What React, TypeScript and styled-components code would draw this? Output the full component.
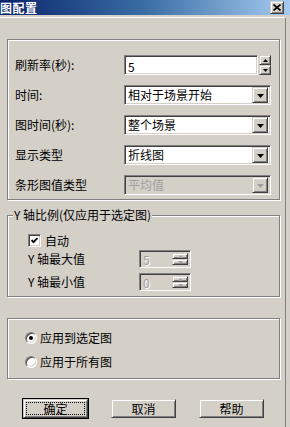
import React from "react";
import styled, { createGlobalStyle, css } from "styled-components";

const FACE = "#d4d0c8";
const SHADOW = "#808080";
const DARK = "#404040";
const HI = "#ffffff";

const GlobalStyle = createGlobalStyle`
  html, body { margin: 0; padding: 0; background: ${FACE}; }
  body {
    font-family: "Noto Sans CJK SC", "Noto Sans", sans-serif;
    font-size: 12px;
    line-height: 14px;
    color: #000;
  }
  * { box-sizing: border-box; }
`;

const sunken = css`
  border: 1px solid;
  border-color: ${SHADOW} ${HI} ${HI} ${SHADOW};
  box-shadow: inset 1px 1px 0 ${DARK}, inset -1px -1px 0 ${FACE};
`;

const raised = css`
  border: 1px solid;
  border-color: ${FACE} ${DARK} ${DARK} ${FACE};
  box-shadow: inset 1px 1px 0 ${HI}, inset -1px -1px 0 ${SHADOW};
  background: ${FACE};
`;

const Window = styled.div`
  width: 290px;
  height: 427px;
  display: flex;
  flex-direction: column;
  background: ${FACE};
  overflow: hidden;
`;

const TitleBar = styled.div`
  flex: none;
  height: 15px;
  display: flex;
  align-items: flex-start;
  justify-content: space-between;
  padding-right: 6px;
  background: linear-gradient(90deg, #0a246a 0%, #3a6ea5 50%, #a6caf0 100%);
`;

const Title = styled.span`
  color: #fff;
  font-weight: bold;
  font-size: 12px;
  line-height: 15px;
  letter-spacing: 0.5px;
`;

const CloseButton = styled.div`
  ${raised};
  width: 14px;
  height: 13px;
  margin-top: 1px;
  display: flex;
  align-items: center;
  justify-content: center;
`;

const Client = styled.div`
  flex: 1;
  margin-top: 2px;
  margin-right: 4px;
  border-top: 1px solid ${HI};
  border-right: 1px solid ${SHADOW};
  display: flex;
  flex-direction: column;
  padding: 21px 0 0 7px;
`;

const GroupBox = styled.div<{ $h: number; $mt: number }>`
  position: relative;
  width: 273px;
  height: ${(p) => p.$h}px;
  margin-top: ${(p) => p.$mt}px;
  border: 1px solid ${SHADOW};
  box-shadow: inset 1px 1px 0 ${HI}, 1px 1px 0 ${HI};
`;

const Legend = styled.span`
  position: absolute;
  top: -8px;
  left: 5px;
  padding: 0 1px;
  background: ${FACE};
  line-height: 14px;
`;

const FormGrid = styled.div`
  display: grid;
  grid-template-columns: 109px 147px;
  grid-auto-rows: 20px;
  row-gap: 10px;
  align-items: center;
  padding: 15px 0 0 7px;
`;

const Label = styled.span`
  white-space: nowrap;
  color: #000;
`;

const SpinWrap = styled.div`
  display: flex;
  gap: 1px;
  height: 20px;
`;

const TextBox = styled.div`
  ${sunken};
  flex: 1;
  height: 100%;
  background: #fff;
  color: #000;
  padding: 2px 0 0 3px;
  line-height: 15px;
  display: flex;
  align-items: center;
  min-width: 0;
`;

const SpinButtons = styled.div<{ $w: number }>`
  display: flex;
  flex-direction: column;
  width: ${(p) => p.$w}px;
  flex: none;
`;

const SmallButton = styled.div`
  ${raised};
  flex: 1;
  display: flex;
  align-items: center;
  justify-content: center;
`;

const Select = styled.div<{ $disabled?: boolean }>`
  ${sunken};
  height: 20px;
  background: ${(p) => (p.$disabled ? FACE : "#fff")};
  color: ${(p) => (p.$disabled ? "#a0a0a0" : "#000")};
  display: flex;
  align-items: center;
  padding: 2px 2px 2px 3px;
`;

const SelectText = styled.span`
  flex: 1;
  white-space: nowrap;
  line-height: 16px;
`;

const DropButton = styled.div`
  ${raised};
  width: 16px;
  height: 16px;
  flex: none;
  display: flex;
  align-items: center;
  justify-content: center;
  padding-top: 1px;
`;

const AxisBody = styled.div`
  display: flex;
  flex-direction: column;
  padding: 18px 0 0 20px;
`;

const CheckRow = styled.label`
  display: flex;
  align-items: center;
  gap: 4px;
  height: 13px;
`;

const CheckBox = styled.span`
  ${sunken};
  width: 13px;
  height: 13px;
  background: #fff;
  display: flex;
  align-items: center;
  justify-content: center;
`;

const AxisRow = styled.div<{ $mt: number }>`
  display: grid;
  grid-template-columns: 111px 52px;
  align-items: center;
  height: 18px;
  margin-top: ${(p) => p.$mt}px;
`;

const MiniSpin = styled.div`
  ${sunken};
  height: 18px;
  background: ${FACE};
  display: flex;
  padding: 2px;
`;

const MiniValue = styled.span`
  flex: 1;
  color: #a0a0a0;
  text-shadow: 1px 1px 0 #fff;
  line-height: 14px;
  padding-left: 1px;
`;

const RadioBody = styled.div`
  display: flex;
  flex-direction: column;
  gap: 10px;
  padding: 12px 0 0 17px;
`;

const RadioRow = styled.label`
  display: flex;
  align-items: center;
  gap: 3px;
  height: 14px;
`;

const RadioCircle = styled.span<{ $checked?: boolean }>`
  width: 12px;
  height: 12px;
  border-radius: 50%;
  border: 1px solid;
  border-color: ${SHADOW} ${HI} ${HI} ${SHADOW};
  box-shadow: inset 1px 1px 0 ${DARK}, inset -1px -1px 0 ${FACE};
  background: #fff;
  display: flex;
  align-items: center;
  justify-content: center;
  &::after {
    content: "";
    width: 4px;
    height: 4px;
    border-radius: 50%;
    background: ${(p) => (p.$checked ? "#000" : "transparent")};
  }
`;

const ButtonRow = styled.div`
  display: flex;
  gap: 21px;
  margin-top: 19px;
  padding-left: 15px;
`;

const PushButton = styled.div<{ $default?: boolean }>`
  width: 67px;
  height: 21px;
  display: flex;
  background: ${FACE};
  border: 1px solid ${(p) => (p.$default ? "#000" : "transparent")};
`;

const ButtonFace = styled.div`
  ${raised};
  flex: 1;
  display: flex;
  align-items: center;
  justify-content: center;
  padding: 2px;
`;

const FocusRing = styled.span<{ $show?: boolean }>`
  flex: 1;
  align-self: stretch;
  display: flex;
  align-items: center;
  justify-content: center;
  border: 1px dotted ${(p) => (p.$show ? "#000" : "transparent")};
  line-height: 14px;
`;

const Arrow = ({ dir, w, h, color }: { dir: "up" | "down"; w: number; h: number; color: string }) => (
  <svg width={w} height={h} viewBox={`0 0 ${w} ${h}`}>
    {dir === "down" ? (
      <polygon points={`0,0 ${w},0 ${w / 2},${h}`} fill={color} />
    ) : (
      <polygon points={`0,${h} ${w},${h} ${w / 2},0`} fill={color} />
    )}
  </svg>
);

const DropDown = ({ text, disabled }: { text: string; disabled?: boolean }) => (
  <Select $disabled={disabled}>
    <SelectText>{text}</SelectText>
    <DropButton>
      <Arrow dir="down" w={7} h={4} color={disabled ? "#a0a0a0" : "#000"} />
    </DropButton>
  </Select>
);

const AxisSpin = ({ value }: { value: string }) => (
  <MiniSpin>
    <MiniValue>{value}</MiniValue>
    <SpinButtons $w={16}>
      <SmallButton>
        <Arrow dir="up" w={5} h={3} color="#a0a0a0" />
      </SmallButton>
      <SmallButton>
        <Arrow dir="down" w={5} h={3} color="#a0a0a0" />
      </SmallButton>
    </SpinButtons>
  </MiniSpin>
);

export default function App() {
  return (
    <>
      <GlobalStyle />
      <Window>
        <TitleBar>
          <Title>图配置</Title>
          <CloseButton>
            <svg width="8" height="7" viewBox="0 0 8 7">
              <path d="M0.5 0.5 L7.5 6.5 M7.5 0.5 L0.5 6.5" stroke="#000" strokeWidth="1.6" />
            </svg>
          </CloseButton>
        </TitleBar>
        <Client>
          <GroupBox $h={161} $mt={0}>
            <FormGrid>
              <Label>刷新率(秒):</Label>
              <SpinWrap>
                <TextBox>5</TextBox>
                <SpinButtons $w={12}>
                  <SmallButton>
                    <Arrow dir="up" w={5} h={3} color="#000" />
                  </SmallButton>
                  <SmallButton>
                    <Arrow dir="down" w={5} h={3} color="#000" />
                  </SmallButton>
                </SpinButtons>
              </SpinWrap>
              <Label>时间:</Label>
              <DropDown text="相对于场景开始" />
              <Label>图时间(秒):</Label>
              <DropDown text="整个场景" />
              <Label>显示类型</Label>
              <DropDown text="折线图" />
              <Label>条形图值类型</Label>
              <DropDown text="平均值" disabled />
            </FormGrid>
          </GroupBox>

          <GroupBox $h={82} $mt={15}>
            <Legend>Y 轴比例(仅应用于选定图)</Legend>
            <AxisBody>
              <CheckRow>
                <CheckBox>
                  <svg width="7" height="7" viewBox="0 0 7 7">
                    <path d="M0.5 3 L2.5 5.2 L6.5 1" stroke="#000" strokeWidth="1.8" fill="none" />
                  </svg>
                </CheckBox>
                自动
              </CheckRow>
              <AxisRow $mt={3}>
                <Label>Y 轴最大值</Label>
                <AxisSpin value="5" />
              </AxisRow>
              <AxisRow $mt={5}>
                <Label>Y 轴最小值</Label>
                <AxisSpin value="0" />
              </AxisRow>
            </AxisBody>
          </GroupBox>

          <GroupBox $h={61} $mt={21}>
            <RadioBody>
              <RadioRow>
                <RadioCircle $checked />
                应用到选定图
              </RadioRow>
              <RadioRow>
                <RadioCircle />
                应用于所有图
              </RadioRow>
            </RadioBody>
          </GroupBox>

          <ButtonRow>
            <PushButton $default>
              <ButtonFace>
                <FocusRing $show>确定</FocusRing>
              </ButtonFace>
            </PushButton>
            <PushButton>
              <ButtonFace>
                <FocusRing>取消</FocusRing>
              </ButtonFace>
            </PushButton>
            <PushButton>
              <ButtonFace>
                <FocusRing>帮助</FocusRing>
              </ButtonFace>
            </PushButton>
          </ButtonRow>
        </Client>
      </Window>
    </>
  );
}
